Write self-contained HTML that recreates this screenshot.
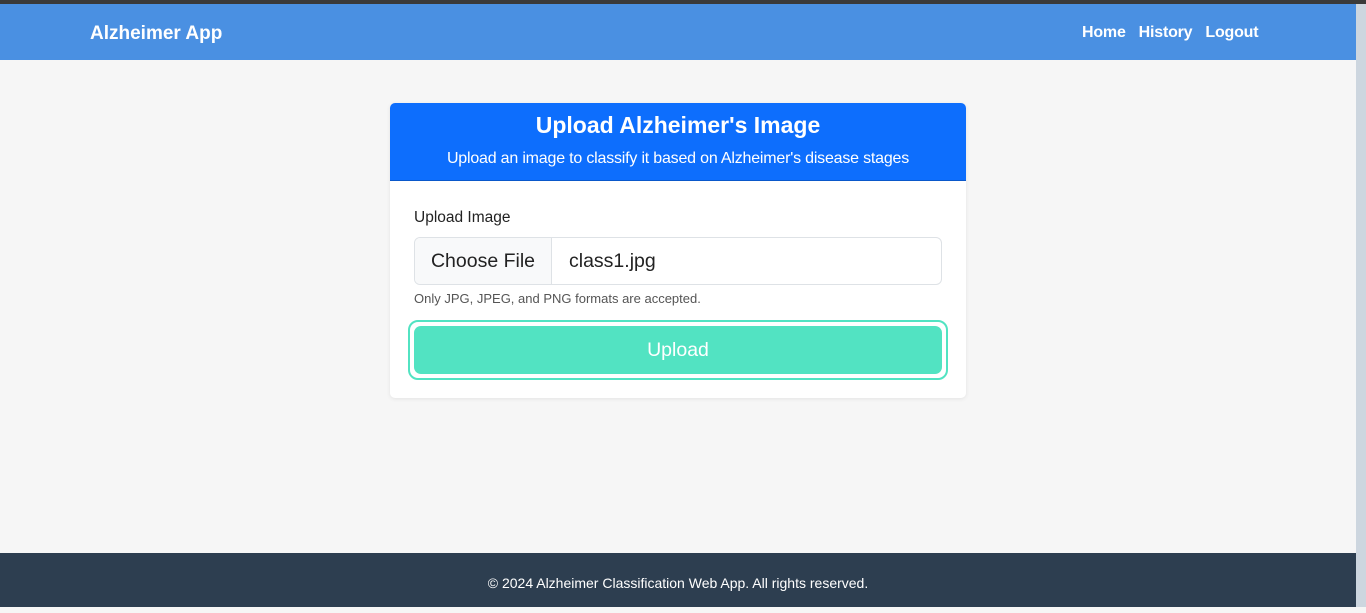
<!DOCTYPE html>
<html><head><style>
*{box-sizing:border-box;margin:0;padding:0}
body{width:1366px;height:607px;overflow:hidden;background:#f6f6f6;font-family:"Liberation Sans",Arial,sans-serif;position:relative}
.top{position:absolute;left:0;top:0;width:1366px;height:4px;background:#3a3a3a}
.nav{position:absolute;left:0;top:4px;width:1356px;height:56px;background:#4a90e2;color:#fff;font-weight:bold}
.brand{position:absolute;left:90px;top:19px;font-size:19px}
.links{position:absolute;left:1082px;top:20px;font-size:16px;letter-spacing:-0.2px}
.links span{margin-right:13px}
.sb{position:absolute;right:0;top:4px;width:10px;height:603px;background:#cdd6df}
.card{position:absolute;left:390px;top:103px;width:576px;height:295px;background:#fff;border-radius:5px;box-shadow:0 1px 4px rgba(0,0,0,.08);overflow:hidden}
.hd{height:78px;background:#0d6efd;color:#fff;text-align:center;border-bottom:1px solid #0a58ca}
.hd h1{font-size:23px;padding-top:9px;line-height:26px}
.hd p{font-size:16px;margin-top:12px;letter-spacing:-0.2px}
.lbl{position:absolute;left:24px;top:106px;font-size:15.5px;color:#222}
.inp{position:absolute;left:24px;top:134px;width:528px;height:48px;border:1px solid #dee2e6;border-radius:6px;overflow:hidden;font-size:19.5px;color:#222}
.cf{position:absolute;left:0;top:0;width:137px;height:46px;background:#f8f9fa;border-right:1px solid #dee2e6;text-align:center;line-height:46px}
.fn{position:absolute;left:154px;top:0;line-height:46px}
.help{position:absolute;left:24px;top:188px;font-size:13px;color:#555}
.bo{position:absolute;left:18px;top:217px;width:540px;height:60px;border:2px solid #52e3c2;border-radius:10px}
.btn{position:absolute;left:24px;top:223px;width:528px;height:48px;background:#52e3c2;border-radius:7px;color:#fff;font-size:19.5px;text-align:center;line-height:48px}
.ft{position:absolute;left:0;top:553px;width:1356px;height:54px;background:#2d3e50;color:#fff;text-align:center;font-size:14px;line-height:60px}
</style></head><body>
<div class="top"></div>
<div class="nav"><div class="brand">Alzheimer App</div><div class="links"><span>Home</span><span>History</span><span>Logout</span></div></div>
<div class="sb"></div>
<div class="card">
<div class="hd"><h1>Upload Alzheimer's Image</h1><p>Upload an image to classify it based on Alzheimer's disease stages</p></div>
<div class="lbl">Upload Image</div>
<div class="inp"><div class="cf">Choose File</div><div class="fn">class1.jpg</div></div>
<div class="help">Only JPG, JPEG, and PNG formats are accepted.</div>
<div class="bo"></div>
<div class="btn">Upload</div>
</div>
<div class="ft">© 2024 Alzheimer Classification Web App. All rights reserved.</div>
</body></html>
